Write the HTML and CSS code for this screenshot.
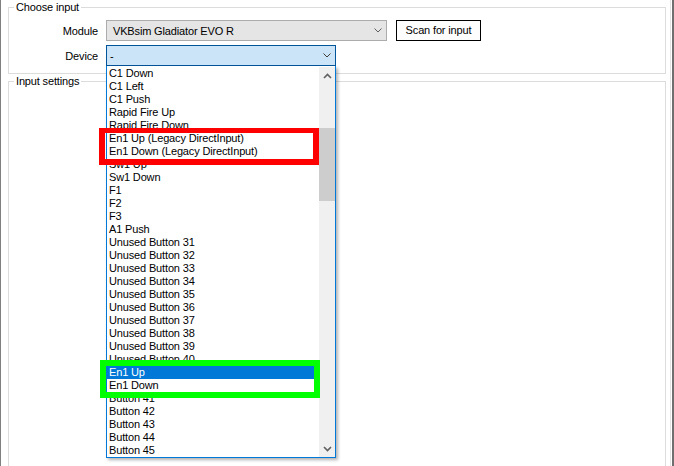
FILE: index.html
```html
<!DOCTYPE html>
<html>
<head>
<meta charset="utf-8">
<title>Choose input</title>
<link rel="stylesheet" href="styles.css">
</head>
<body>
<div class="window">
  <div class="pane">
    <div class="group group-choose">
      <div class="group-title">Choose input</div>
      <div class="rows">
        <div class="row">
          <div class="label">Module</div>
          <div class="combo combo-module">
            <div class="combo-text">VKBsim Gladiator EVO R</div>
            <div class="combo-arrow"><svg width="8" height="5" viewBox="0 0 8 5"><path d="M0.5 0.5 L4 4 L7.5 0.5" fill="none" stroke="#606060" stroke-width="1"/></svg></div>
          </div>
          <button class="btn">Scan for input</button>
        </div>
        <div class="row row-device">
          <div class="label">Device</div>
          <div class="combo combo-device">
            <div class="combo-text combo-text-edit">-</div>
            <div class="combo-arrow"><svg width="8" height="5" viewBox="0 0 8 5"><path d="M0.5 0.5 L4 4 L7.5 0.5" fill="none" stroke="#404040" stroke-width="1"/></svg></div>
            <div class="dropdown">
              <div class="items">
                <div class="item">C1 Down</div>
                <div class="item">C1 Left</div>
                <div class="item">C1 Push</div>
                <div class="item">Rapid Fire Up</div>
                <div class="item">Rapid Fire Down</div>
                <div class="item">En1 Up (Legacy DirectInput)</div>
                <div class="item">En1 Down (Legacy DirectInput)</div>
                <div class="item">Sw1 Up</div>
                <div class="item">Sw1 Down</div>
                <div class="item">F1</div>
                <div class="item">F2</div>
                <div class="item">F3</div>
                <div class="item">A1 Push</div>
                <div class="item">Unused Button 31</div>
                <div class="item">Unused Button 32</div>
                <div class="item">Unused Button 33</div>
                <div class="item">Unused Button 34</div>
                <div class="item">Unused Button 35</div>
                <div class="item">Unused Button 36</div>
                <div class="item">Unused Button 37</div>
                <div class="item">Unused Button 38</div>
                <div class="item">Unused Button 39</div>
                <div class="item">Unused Button 40</div>
                <div class="item selected">En1 Up</div>
                <div class="item">En1 Down</div>
                <div class="item">Button 41</div>
                <div class="item">Button 42</div>
                <div class="item">Button 43</div>
                <div class="item">Button 44</div>
                <div class="item">Button 45</div>
              </div>
              <div class="scrollbar">
                <div class="sb-btn"><svg width="9" height="6" viewBox="0 0 9 6"><path d="M1 5 L4.5 1.5 L8 5" fill="none" stroke="#606060" stroke-width="1.6"/></svg></div>
                <div class="sb-track"><div class="thumb"></div></div>
                <div class="sb-btn"><svg width="9" height="6" viewBox="0 0 9 6"><path d="M1 1 L4.5 4.5 L8 1" fill="none" stroke="#606060" stroke-width="1.6"/></svg></div>
              </div>
              <div class="mark mark-red"></div>
              <div class="mark mark-green"></div>
            </div>
          </div>
        </div>
      </div>
    </div>
    <div class="group group-settings">
      <div class="group-title">Input settings</div>
    </div>
  </div>
</div>
</body>
</html>
```

FILE: styles.css
```css
* { box-sizing: border-box; }
html, body { margin: 0; padding: 0; }
body {
  width: 674px;
  height: 466px;
  overflow: hidden;
  background: #fff;
  font-family: "Liberation Sans", Arial, sans-serif;
  font-size: 11px;
  letter-spacing: -0.15px;
  color: #000;
}
.window {
  display: flex;
  height: 466px;
  border-left: 1px solid #808080;
  border-right: 2px solid #6f6f6f;
}
.pane {
  flex: 1;
  margin-right: 1px;
  border-right: 1px solid #e3e3e3;
  padding: 7px 4px 0 7px;
  display: flex;
  flex-direction: column;
  gap: 7px;
  overflow: hidden;
}
.group {
  border: 1px solid #dcdcdc;
  flex: none;
}
.group-settings { height: 420px; }
.group-title {
  width: fit-content;
  margin: -7px 0 0 5px;
  padding: 0 2px;
  background: #fff;
  line-height: 13px;
  white-space: nowrap;
}
.rows {
  margin-top: 6px;
  padding-bottom: 7px;
  display: flex;
  flex-direction: column;
  gap: 4px;
}
.row {
  display: flex;
  align-items: center;
  height: 21px;
}
.label {
  width: 89px;
  margin-right: 8px;
  text-align: right;
}
.combo {
  position: relative;
  height: 21px;
  display: flex;
  align-items: center;
  border: 1px solid #acacac;
}
.combo-module {
  width: 281px;
  background: #e5e5e5;
}
.combo-device {
  width: 230px;
  background: #cce4f7;
  border-color: #005499;
}
.combo-text {
  flex: 1;
  padding-left: 6px;
  white-space: nowrap;
}
.combo-text-edit { padding-left: 3px; }
.combo-arrow {
  width: 17px;
  display: flex;
  justify-content: center;
  align-items: center;
}
.combo-arrow svg { display: block; }
.btn {
  margin-left: 9px;
  width: 85px;
  height: 21px;
  padding: 0;
  border: 1px solid #000;
  background: #fdfdfd;
  font: inherit;
  letter-spacing: inherit;
  color: #000;
  line-height: 19px;
  text-align: center;
}
.dropdown {
  position: absolute;
  left: -1px;
  top: calc(100% + 1px);
  width: 230px;
  height: 392px;
  border: 1px solid #0078d7;
  border-top: none;
  padding-top: 1px;
  background: #fff;
  display: flex;
  box-shadow: 2px 2px 3px rgba(0, 0, 0, 0.3);
  z-index: 2;
}
.items {
  width: 212px;
  overflow: hidden;
}
.item {
  height: 13px;
  line-height: 13px;
  padding-left: 2px;
  white-space: nowrap;
}
.item.selected {
  background: #0078d7;
  color: #fff;
}
.scrollbar {
  width: 16px;
  background: #f0f0f0;
  display: flex;
  flex-direction: column;
}
.sb-btn {
  height: 17px;
  display: flex;
  align-items: center;
  justify-content: center;
}
.sb-btn svg { display: block; }
.sb-track {
  flex: 1;
  padding-top: 44px;
}
.thumb {
  height: 73px;
  background: #cdcdcd;
}
.mark {
  position: absolute;
}
.mark-red {
  left: -8px;
  top: 62px;
  width: 220px;
  height: 37px;
  border-style: solid;
  border-color: #ff0000;
  border-width: 5px 6px 6px 6px;
}
.mark-green {
  left: -7px;
  top: 294px;
  width: 220px;
  height: 38px;
  border: 6px solid #00ff00;
}
```
